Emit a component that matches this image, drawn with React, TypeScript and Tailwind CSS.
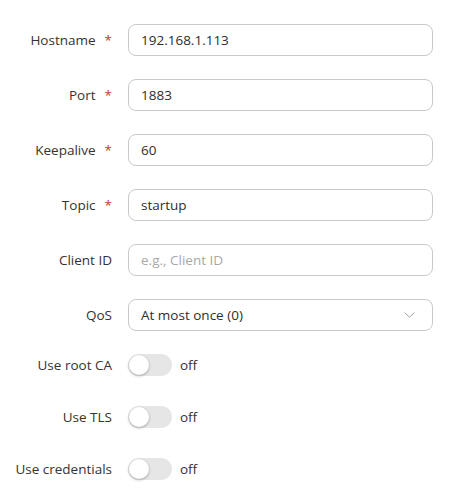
const font = { fontFamily: '"Open Sans", "Noto Sans", sans-serif' };

function Label({ text, required }: { text: string; required?: boolean }) {
  return (
    <div className="flex w-[112px] shrink-0 items-center justify-end text-[13.5px] text-[#333]">
      <span>{text}</span>
      {required && <span className="ml-[9px] text-[#c0392b]">*</span>}
    </div>
  );
}

function TextRow({
  label,
  value,
  placeholder,
  required,
}: {
  label: string;
  value?: string;
  placeholder?: string;
  required?: boolean;
}) {
  return (
    <div className="flex items-center gap-4">
      <Label text={label} required={required} />
      <div className="flex h-[32px] flex-1 items-center rounded-[8px] border border-[#c9c9c9] bg-white px-3 text-[13.5px]">
        {value ? (
          <span className="text-[#2e2e2e]">{value}</span>
        ) : (
          <span className="text-[#a8a8a8]">{placeholder}</span>
        )}
      </div>
    </div>
  );
}

function ToggleRow({ label }: { label: string }) {
  return (
    <div className="flex items-center gap-4">
      <Label text={label} />
      <div className="flex items-center gap-2">
        <div className="flex h-[22px] w-[44px] items-center rounded-full bg-[#e6e6e6] px-px">
          <div className="h-[20px] w-[20px] rounded-full bg-white shadow-[0_1px_3px_rgba(0,0,0,0.3)]" />
        </div>
        <span className="text-[13.5px] text-[#333]">off</span>
      </div>
    </div>
  );
}

export default function App() {
  return (
    <div className="min-h-[500px] bg-white pt-6 pr-5" style={font}>
      <div className="flex flex-col gap-[23px]">
        <TextRow label="Hostname" value="192.168.1.113" required />
        <TextRow label="Port" value="1883" required />
        <TextRow label="Keepalive" value="60" required />
        <TextRow label="Topic" value="startup" required />
        <TextRow label="Client ID" placeholder="e.g., Client ID" />
        <div className="flex items-center gap-4">
          <Label text="QoS" />
          <div className="flex h-[32px] flex-1 items-center justify-between rounded-[8px] border border-[#c9c9c9] bg-white pl-3 pr-[17px] text-[13.5px] text-[#2e2e2e]">
            <span>At most once (0)</span>
            <svg width="11" height="6" viewBox="0 0 11 6" fill="none">
              <path d="M0.5 0.5 L5.5 5.2 L10.5 0.5" stroke="#a0a0a0" strokeWidth="1" />
            </svg>
          </div>
        </div>
      </div>
      <div className="mt-[23px] flex flex-col gap-[30px]">
        <ToggleRow label="Use root CA" />
        <ToggleRow label="Use TLS" />
        <ToggleRow label="Use credentials" />
      </div>
    </div>
  );
}
